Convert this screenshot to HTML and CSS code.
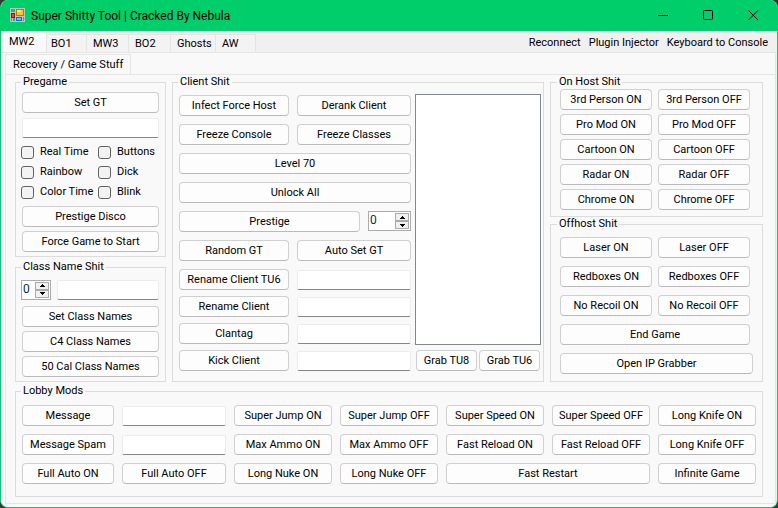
FILE: index.html
```
<!DOCTYPE html>
<html lang="en">
<head>
<meta charset="utf-8">
<title>Super Shitty Tool | Cracked By Nebula</title>
<link rel="stylesheet" href="styles.css">
</head>
<body>
<div class="window">
  <header class="titlebar">
    <svg class="app-icon" viewBox="0 0 15 15" aria-hidden="true">
      <path d="M0 0h15v14H0z" fill="#b9c6c2"/>
      <path d="M1 1h4v3H1zM1 10h1v3H1zM3 10h2v3H3zM13 9h1v4h-1z" fill="#17c074"/>
      <path d="M6 1h8v7H6z" fill="#b07a10"/>
      <path d="M7 2h6v5H7z" fill="#fdc02f"/>
      <path d="M7 2h4v2H7z" fill="#ffe58a"/>
      <path d="M1 5h4v5H1z" fill="#8f1d12"/>
      <path d="M2 6h2v3H2z" fill="#e8482f"/>
      <path d="M6 9h6v4H6z" fill="#2b62c4"/>
      <path d="M7 10h4v2H7z" fill="#7fb3f5"/>
    </svg>
    <h1 class="title">Super Shitty Tool | Cracked By Nebula</h1>
    <button class="caption" aria-label="Minimize"><svg viewBox="0 0 11 11"><path d="M0 5.5h10"/></svg></button>
    <button class="caption" aria-label="Maximize"><svg viewBox="0 0 11 11"><rect x=".5" y=".5" width="9" height="9" rx="1"/></svg></button>
    <button class="caption" aria-label="Close"><svg viewBox="0 0 11 11"><path d="M.5 .5l9.500 9.500M10 .5l-9.500 9.500"/></svg></button>
  </header>
  <nav class="strip">
    <div class="tabs" role="tablist">
      <button class="tab selected" role="tab" aria-selected="true">MW2</button>
      <button class="tab first" role="tab">BO1</button>
      <button class="tab wide" role="tab">MW3</button>
      <button class="tab wide" role="tab">BO2</button>
      <button class="tab wider" role="tab">Ghosts</button>
      <button class="tab" role="tab">AW</button>
    </div>
    <div class="menu">
      <button>Reconnect</button>
      <button>Plugin Injector</button>
      <button>Keyboard to Console</button>
    </div>
  </nav>
  <main class="outer-page">
    <div class="subtabs" role="tablist">
      <button class="subtab" role="tab" aria-selected="true">Recovery / Game Stuff</button>
    </div>
    <div class="page">
      <div class="columns">
        <div class="column spaced">
          <fieldset class="group stack">
            <legend>Pregame</legend>
            <button class="btn">Set GT</button>
            <input class="box" type="text" aria-label="Gamertag">
            <div class="checks">
              <label><input type="checkbox">Real Time</label>
              <label><input type="checkbox">Buttons</label>
              <label><input type="checkbox">Rainbow</label>
              <label><input type="checkbox">Dick</label>
              <label><input type="checkbox">Color Time</label>
              <label><input type="checkbox">Blink</label>
            </div>
            <button class="btn">Prestige Disco</button>
            <button class="btn">Force Game to Start</button>
          </fieldset>
          <fieldset class="group stack fill">
            <legend>Class Name Shit</legend>
            <div class="class-row">
              <div class="spinner small">
                <input type="text" value="0" aria-label="Class number">
                <span class="steps">
                  <button aria-label="Up"><svg viewBox="0 0 5 3"><path d="M2 0h1v1h1v1h1v1H0V2h1V1h1z"/></svg></button>
                  <button aria-label="Down"><svg viewBox="0 0 5 3"><path d="M0 0h5v1H4v1H3v1H2V2H1V1H0z"/></svg></button>
                </span>
              </div>
              <input class="box" type="text" aria-label="Class name">
            </div>
            <button class="btn">Set Class Names</button>
            <button class="btn">C4 Class Names</button>
            <button class="btn">50 Cal Class Names</button>
          </fieldset>
        </div>

        <fieldset class="group client">
          <legend>Client Shit</legend>
          <div class="client-body">
            <div class="client-controls">
              <div class="rows">
                <div class="pair"><button class="btn">Infect Force Host</button><button class="btn">Derank Client</button></div>
                <div class="pair"><button class="btn">Freeze Console</button><button class="btn">Freeze Classes</button></div>
                <button class="btn">Level 70</button>
                <button class="btn">Unlock All</button>
                <div class="prestige">
                  <button class="btn">Prestige</button>
                  <div class="spinner">
                    <input type="text" value="0" aria-label="Prestige level">
                    <span class="steps">
                      <button aria-label="Up"><svg viewBox="0 0 5 3"><path d="M2 0h1v1h1v1h1v1H0V2h1V1h1z"/></svg></button>
                      <button aria-label="Down"><svg viewBox="0 0 5 3"><path d="M0 0h5v1H4v1H3v1H2V2H1V1H0z"/></svg></button>
                    </span>
                  </div>
                </div>
                <div class="pair"><button class="btn">Random GT</button><button class="btn">Auto Set GT</button></div>
                <div class="pair"><button class="btn">Rename Client TU6</button><input class="box" type="text" aria-label="Client name TU6"></div>
              </div>
              <div class="rows tight">
                <div class="pair"><button class="btn">Rename Client</button><input class="box" type="text" aria-label="Client name"></div>
                <div class="pair"><button class="btn">Clantag</button><input class="box" type="text" aria-label="Clantag"></div>
                <div class="pair"><button class="btn">Kick Client</button><input class="box" type="text" aria-label="Kick message"></div>
              </div>
            </div>
            <div class="client-list">
              <select class="listbox" size="2" aria-label="Clients"></select>
              <div class="grab"><button class="btn">Grab TU8</button><button class="btn">Grab TU6</button></div>
            </div>
          </div>
        </fieldset>

        <div class="column">
          <fieldset class="group host">
            <legend>On Host Shit</legend>
            <div class="two">
              <button class="btn">3rd Person ON</button><button class="btn">3rd Person OFF</button>
              <button class="btn">Pro Mod ON</button><button class="btn">Pro Mod OFF</button>
              <button class="btn">Cartoon ON</button><button class="btn">Cartoon OFF</button>
              <button class="btn">Radar ON</button><button class="btn">Radar OFF</button>
              <button class="btn">Chrome ON</button><button class="btn">Chrome OFF</button>
            </div>
          </fieldset>
          <fieldset class="group offhost fill">
            <legend>Offhost Shit</legend>
            <div class="two loose">
              <button class="btn">Laser ON</button><button class="btn">Laser OFF</button>
              <button class="btn">Redboxes ON</button><button class="btn">Redboxes OFF</button>
              <button class="btn">No Recoil ON</button><button class="btn">No Recoil OFF</button>
              <button class="btn full">End Game</button>
              <button class="btn full overhang">Open IP Grabber</button>
            </div>
          </fieldset>
        </div>
      </div>

      <fieldset class="group lobby">
        <legend>Lobby Mods</legend>
        <div class="lobby-grid">
          <button class="btn">Message</button>
          <input class="box" type="text" aria-label="Message">
          <button class="btn">Super Jump ON</button>
          <button class="btn">Super Jump OFF</button>
          <button class="btn">Super Speed ON</button>
          <button class="btn">Super Speed OFF</button>
          <button class="btn">Long Knife ON</button>
          <button class="btn">Message Spam</button>
          <input class="box" type="text" aria-label="Spam message">
          <button class="btn">Max Ammo ON</button>
          <button class="btn">Max Ammo OFF</button>
          <button class="btn">Fast Reload ON</button>
          <button class="btn">Fast Reload OFF</button>
          <button class="btn">Long Knife OFF</button>
          <button class="btn">Full Auto ON</button>
          <button class="btn">Full Auto OFF</button>
          <button class="btn">Long Nuke ON</button>
          <button class="btn">Long Nuke OFF</button>
          <button class="btn full">Fast Restart</button>
          <button class="btn">Infinite Game</button>
        </div>
      </fieldset>
    </div>
  </main>
</div>
</body>
</html>
```
FILE: styles.css
```
* { box-sizing: border-box; }

body {
  margin: 0;
  background: #34382f;
  color: #000;
  font: 11px/14px Roboto, "Liberation Sans", sans-serif;
}

button, input, select {
  margin: 0;
  padding: 0;
  border: 0;
  color: inherit;
  font: inherit;
}

.window {
  display: flex;
  flex-direction: column;
  min-height: 100vh;
  overflow: hidden;
  border: 1px solid #00ce6a;
  border-top: 0;
  border-radius: 8px;
  background: #f0f0f0;
}

/* Title bar */
.titlebar {
  display: flex;
  align-items: center;
  height: 31px;
  padding: 0 1px 0 9px;
  background: #00ce6a;
}
.app-icon { width: 15px; height: 15px; }
.title {
  flex: 1;
  margin: 0 0 0 6px;
  font-size: 12px;
  font-weight: 400;
}
.caption {
  display: grid;
  place-items: center;
  width: 45px;
  height: 31px;
  background: none;
}
.caption svg {
  width: 11px;
  height: 11px;
  fill: none;
  stroke: #000;
}

/* Tab strip */
.strip {
  display: flex;
  justify-content: space-between;
  height: 21px;
}
.tabs { display: flex; align-items: flex-end; }
.tab {
  width: 40px;
  height: 18px;
  padding-left: 6px;
  border: solid #e5e5e5;
  border-width: 1px 1px 0 0;
  background: #f3f3f3;
  text-align: left;
}
.tab.first { padding-left: 4px; }
.tab.wide { width: 42px; }
.tab.wider { width: 45px; }
.tab.selected {
  width: 46px;
  height: 21px;
  padding-left: 8px;
  background: #f9f9f9;
}
.menu {
  display: flex;
  align-items: center;
  gap: 8px;
  padding: 3px 9px 0 0;
}
.menu button { background: none; }

.outer-page {
  display: flex;
  flex: 1;
  flex-direction: column;
  margin-right: 1px;
  padding: 1px 0 3px 4px;
  border: solid #e5e5e5;
  border-width: 1px 1px 0 0;
  background: #f9f9f9;
}
.subtabs { display: flex; height: 20px; }
.subtab {
  margin-bottom: -1px;
  padding: 0 7px 1px;
  border: solid #e5e5e5;
  border-width: 1px 1px 0 1px;
  background: #f9f9f9;
}
.page {
  flex: 1;
  padding: 0 12px 6px 9px;
  border: solid #e5e5e5;
  border-width: 1px 0 1px 1px;
}

/* Group boxes */
.columns {
  display: grid;
  grid-template-columns: minmax(0, 151fr) minmax(0, 372fr) minmax(0, 213fr);
  gap: 6px;
}
.column { display: flex; flex-direction: column; }
.spaced { gap: 3px; }
.fill { flex: 1; }
.group {
  min-width: 0;
  margin: 0;
  padding: 3px 6px 4px;
  border: 1px solid #dcdcdc;
}
.group legend {
  padding: 0 2px;
  margin-left: -1px;
}
.stack { display: flex; flex-direction: column; gap: 4px; }

.btn {
  min-width: 0;
  height: 21px;
  border: 1px solid #d0d0d0;
  border-bottom-color: #bababa;
  border-radius: 4px;
  background: #fdfdfd;
  white-space: nowrap;
}
.box {
  width: 100%;
  min-width: 0;
  height: 20px;
  margin-top: 1px;
  padding: 0 3px;
  border: 1px solid #ececec;
  border-bottom-color: #868686;
  border-radius: 2px;
  background: #fff;
}

.checks {
  display: grid;
  grid-template-columns: 77px 1fr;
  grid-auto-rows: 20px;
  align-items: center;
  margin-left: -1px;
}
.checks label { display: flex; align-items: center; gap: 6px; white-space: nowrap; }
.checks input {
  appearance: none;
  width: 13px;
  height: 13px;
  border: 1px solid #626262;
  border-radius: 3px;
  background: #f3f3f3;
}

.spinner {
  display: flex;
  width: 43px;
  height: 20px;
  padding: 1px;
  border: 1px solid #ababab;
  background: #fff;
}
.spinner.small { width: 30px; }
.spinner input {
  flex: 1;
  min-width: 0;
  padding-bottom: 2px;
  background: none;
  color: #0a2a50;
  font-size: 12px;
}
.steps { display: flex; flex-direction: column; width: 14px; }
.steps button {
  display: grid;
  flex: 1;
  place-items: center;
  border: 1px solid #ababab;
  background: #f0f0f0;
}
.steps svg { width: 5px; height: 3px; }

.class-row {
  display: grid;
  grid-template-columns: 30px 1fr;
  gap: 6px;
  align-items: center;
  height: 25px;
  margin-left: -1px;
}

/* Client group */
.client { padding: 5px 2px 4px 6px; }
.client-body {
  display: grid;
  grid-template-columns: minmax(0, 232fr) minmax(0, 126fr);
  gap: 4px;
}
.client-controls { display: flex; flex-direction: column; gap: 6px; padding-top: 1px; }
.rows { display: flex; flex-direction: column; gap: 8px; }
.rows.tight { gap: 6px; }
.pair {
  display: grid;
  grid-template-columns: minmax(0, 110fr) minmax(0, 114fr);
  gap: 8px;
}
.prestige { display: flex; gap: 8px; }
.prestige .btn { flex: 1; }
.client-list { display: flex; flex-direction: column; gap: 5px; }
.listbox {
  flex: 1;
  border: 1px solid #828790;
  border-radius: 0;
  background: #fff;
}
.grab {
  display: grid;
  grid-template-columns: 1fr 1fr;
  gap: 2px;
  padding: 0 1px;
}

/* Host groups */
.host { padding: 0 12px 6px 9px; }
.offhost { padding: 6px 12px 6px 9px; }
.host legend, .offhost legend { margin-left: -3px; }
.two {
  display: grid;
  grid-template-columns: minmax(0, 1fr) minmax(0, 1fr);
  gap: 4px 6px;
}
.two.loose { row-gap: 8px; }
.full { grid-column: span 2; }
.overhang { margin-right: -3px; }

/* Lobby group */
.lobby { margin-top: 2px; padding: 7px 6px 12px; }
.lobby-grid {
  display: grid;
  grid-template-columns: minmax(0, 92fr) minmax(0, 104fr) repeat(5, minmax(0, 98fr));
  gap: 8px;
}
```
